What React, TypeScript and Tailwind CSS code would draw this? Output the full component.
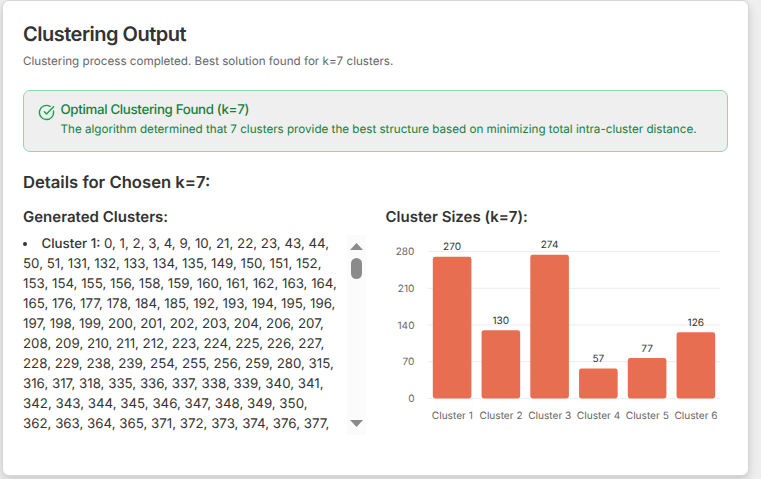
import { CircleCheckBig } from "lucide-react";

const clusterLines = [
  "50, 51, 131, 132, 133, 134, 135, 149, 150, 151, 152,",
  "153, 154, 155, 156, 158, 159, 160, 161, 162, 163, 164,",
  "165, 176, 177, 178, 184, 185, 192, 193, 194, 195, 196,",
  "197, 198, 199, 200, 201, 202, 203, 204, 206, 207,",
  "208, 209, 210, 211, 212, 223, 224, 225, 226, 227,",
  "228, 229, 238, 239, 254, 255, 256, 259, 280, 315,",
  "316, 317, 318, 335, 336, 337, 338, 339, 340, 341,",
  "342, 343, 344, 345, 346, 347, 348, 349, 350,",
  "362, 363, 364, 365, 371, 372, 373, 374, 376, 377,",
];

const sizes = [270, 130, 274, 57, 77, 126];
const ticks = [0, 70, 140, 210, 280];

const BASE = 168.4;
const SCALE = 0.5243;
const STEP = 48.75;

function SizeChart() {
  return (
    <svg width="343" height="205" viewBox="0 0 343 205" className="block font-['Inter',sans-serif] text-[10.1px]">
      {ticks.map((t) => {
        const y = BASE - t * SCALE;
        return (
          <g key={t}>
            <line x1="41.5" x2="334.5" y1={y} y2={y} stroke="#ececec" strokeWidth="1" />
            <text x="28.5" y={y + 3.8} textAnchor="end" fill="#666666">
              {t}
            </text>
          </g>
        );
      })}
      {sizes.map((s, i) => {
        const x = 46.8 + i * STEP;
        const h = s * SCALE;
        return (
          <g key={i}>
            <rect x={x} y={BASE - h} width="38.6" height={h} rx="2.4" fill="#e76e50" />
            <text x={x + 19.3} y={BASE - h - 6.5} textAnchor="middle" fill="#333333">
              {s}
            </text>
            <text x={x + 19.5} y={189} textAnchor="middle" fill="#666666">
              {`Cluster ${i + 1}`}
            </text>
          </g>
        );
      })}
    </svg>
  );
}

export default function App() {
  return (
    <div className="h-[479px] w-[761px] overflow-hidden bg-[#efefef] pl-[2px] font-['Inter',sans-serif] text-[#333333] antialiased [text-rendering:geometricPrecision]">
      <div className="h-[476px] w-[747px] rounded-[7px] border border-[#d6d6d6] bg-white px-5 pt-5 shadow-[0_4px_10px_rgba(0,0,0,0.16)]">
        <h1 className="h-[26px] whitespace-nowrap text-[20px] font-semibold leading-[26px] tracking-[-0.5px]">Clustering Output</h1>
        <p className="mt-[6px] h-4 whitespace-nowrap text-[11.65px] leading-4 text-[#666666]">
          Clustering process completed. Best solution found for k=7 clusters.
        </p>

        <div className="mt-[21px] flex h-[62px] w-[705px] rounded-[7px] border border-[#86dfa9] bg-[#efefef] pl-[14px] pt-[10px] text-[#15803d]">
          <CircleCheckBig className="mt-[3px] size-[17px] shrink-0 text-[#16a34a]" strokeWidth={2} />
          <div className="ml-[5.5px] whitespace-nowrap">
            <div className="h-[18px] text-[13.3px] font-medium leading-[18px] tracking-[-0.33px]">Optimal Clustering Found (k=7)</div>
            <div className="h-5 text-[11.65px] leading-5">
              The algorithm determined that 7 clusters provide the best structure based on minimizing total intra-cluster distance.
            </div>
          </div>
        </div>

        <h2 className="mt-[19px] h-6 whitespace-nowrap text-[16.65px] font-semibold leading-6">Details for Chosen k=7:</h2>

        <div className="mt-[12px] flex">
          <section className="w-[362.5px] shrink-0">
            <h3 className="h-5 text-[15px] font-semibold leading-5">Generated Clusters:</h3>
            <div className="mt-[8px] flex h-[200px] w-[343px] justify-between overflow-hidden">
              <div className="-mt-px whitespace-nowrap text-[13.3px] leading-5">
                <div className="flex h-5 items-center">
                  <span className="mr-[14.5px] size-1 rounded-full bg-[#333333]" />
                  <span>
                    <span className="font-medium">Cluster 1:</span> 0, 1, 2, 3, 4, 9, 10, 21, 22, 23, 43, 44,
                  </span>
                </div>
                {clusterLines.map((line) => (
                  <div key={line} className="h-5">
                    {line}
                  </div>
                ))}
              </div>
              <div className="flex w-[19px] flex-col items-center bg-[#fbfbfb] pb-[8px] pt-[8px]">
                <svg width="13" height="7" viewBox="0 0 13 7">
                  <path d="M0 7L6.5 0L13 7Z" fill="#8b8b8b" />
                </svg>
                <div className="mt-[8px] h-[21px] w-[11px] rounded-full bg-[#8b8b8b]" />
                <svg width="13" height="7" viewBox="0 0 13 7" className="mt-auto">
                  <path d="M0 0L6.5 7L13 0Z" fill="#8b8b8b" />
                </svg>
              </div>
            </div>
          </section>
          <section>
            <h3 className="h-5 whitespace-nowrap text-[15px] font-semibold leading-5">Cluster Sizes (k=7):</h3>
            <div className="mt-[3px]">
              <SizeChart />
            </div>
          </section>
        </div>
      </div>
    </div>
  );
}
